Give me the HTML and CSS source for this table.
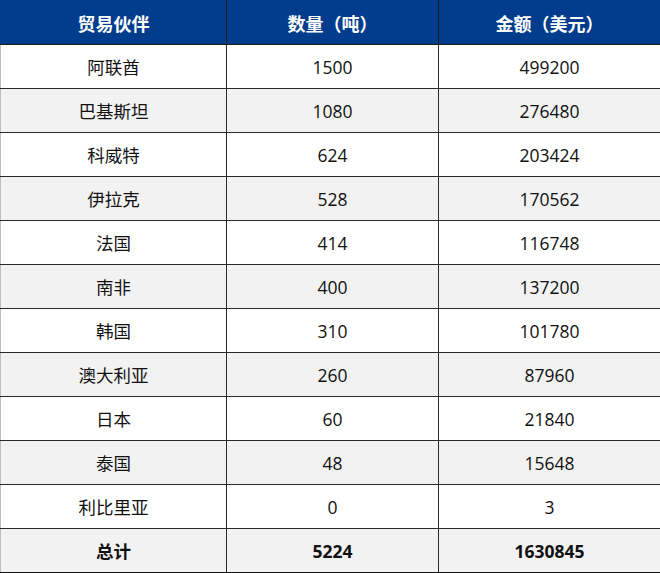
FILE: index.html
```html
<!DOCTYPE html>
<html lang="zh">
<head>
<meta charset="utf-8">
<link rel="stylesheet" href="styles.css">
</head>
<body>
<table class="trade">
  <colgroup><col class="c1"><col class="c2"><col class="c3"></colgroup>
  <thead>
    <tr><th>贸易伙伴</th><th>数量（吨）</th><th>金额（美元）</th></tr>
  </thead>
  <tbody>
    <tr><td>阿联酋</td><td>1500</td><td>499200</td></tr>
    <tr><td>巴基斯坦</td><td>1080</td><td>276480</td></tr>
    <tr><td>科威特</td><td>624</td><td>203424</td></tr>
    <tr><td>伊拉克</td><td>528</td><td>170562</td></tr>
    <tr><td>法国</td><td>414</td><td>116748</td></tr>
    <tr><td>南非</td><td>400</td><td>137200</td></tr>
    <tr><td>韩国</td><td>310</td><td>101780</td></tr>
    <tr><td>澳大利亚</td><td>260</td><td>87960</td></tr>
    <tr><td>日本</td><td>60</td><td>21840</td></tr>
    <tr><td>泰国</td><td>48</td><td>15648</td></tr>
    <tr><td>利比里亚</td><td>0</td><td>3</td></tr>
    <tr class="total"><td>总计</td><td>5224</td><td>1630845</td></tr>
  </tbody>
</table>
</body>
</html>
```
FILE: styles.css
```css
html, body {
  margin: 0;
  padding: 0;
  background: #ffffff;
}
.trade {
  width: 660px;
  border-collapse: collapse;
  table-layout: fixed;
  font-family: "Open Sans", "Noto Sans CJK SC", sans-serif;
  font-size: 17.5px;
  color: #111;
}
.c1 { width: 226px; }
.c2 { width: 212px; }
.c3 { width: 222px; }
.trade th, .trade td {
  height: 44px;
  padding: 0;
  text-align: center;
  vertical-align: middle;
  border: 1px solid #2a2a2a;
  box-sizing: border-box;
}
.trade th {
  background: #023c8c;
  color: #ffffff;
  font-weight: bold;
  font-size: 18px;
  font-family: "Noto Sans CJK SC", sans-serif;
  border-color: #023c8c #1a1a1a #1a1a1a #023c8c;
}
.trade tbody tr:nth-child(even) td {
  background: #f2f2f2;
}
.trade td:first-child {
  border-left-color: #bdbdbd;
}
.trade td:last-child {
  border-right-color: #bdbdbd;
}
.trade .total td {
  font-weight: bold;
  border-bottom-color: #111;
}
```
